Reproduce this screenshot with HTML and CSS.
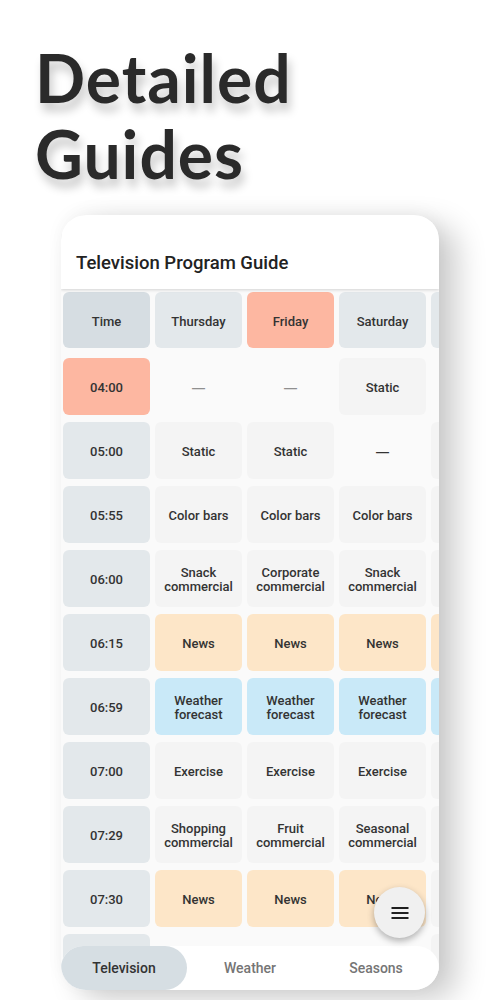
FILE: index.html
```html
<!DOCTYPE html>
<html lang="en">
<head>
<meta charset="utf-8">
<title>Detailed Guides</title>
<link rel="stylesheet" href="styles.css">
</head>
<body>
<div class="page">
  <h1 class="hero">Detailed<br>Guides</h1>
  <div class="phone">
    <header class="app-bar"><h2 class="app-title">Television Program Guide</h2></header>
    <div class="schedule">
      <div class="row head">
        <div class="cell time-head">Time</div>
        <div class="cell day">Thursday</div>
        <div class="cell day hot">Friday</div>
        <div class="cell day">Saturday</div>
        <div class="cell day"></div>
      </div>
      <div class="rows">
        <div class="row">
          <div class="cell time hot">04:00</div>
          <div class="cell empty dash faint">—</div>
          <div class="cell empty dash faint">—</div>
          <div class="cell">Static</div>
          <div class="cell empty"></div>
        </div>
        <div class="row">
          <div class="cell time">05:00</div>
          <div class="cell">Static</div>
          <div class="cell">Static</div>
          <div class="cell empty dash">—</div>
          <div class="cell"></div>
        </div>
        <div class="row">
          <div class="cell time">05:55</div>
          <div class="cell">Color bars</div>
          <div class="cell">Color bars</div>
          <div class="cell">Color bars</div>
          <div class="cell"></div>
        </div>
        <div class="row">
          <div class="cell time">06:00</div>
          <div class="cell">Snack<br>commercial</div>
          <div class="cell">Corporate<br>commercial</div>
          <div class="cell">Snack<br>commercial</div>
          <div class="cell"></div>
        </div>
        <div class="row">
          <div class="cell time">06:15</div>
          <div class="cell news">News</div>
          <div class="cell news">News</div>
          <div class="cell news">News</div>
          <div class="cell news"></div>
        </div>
        <div class="row">
          <div class="cell time">06:59</div>
          <div class="cell weather">Weather<br>forecast</div>
          <div class="cell weather">Weather<br>forecast</div>
          <div class="cell weather">Weather<br>forecast</div>
          <div class="cell weather"></div>
        </div>
        <div class="row">
          <div class="cell time">07:00</div>
          <div class="cell">Exercise</div>
          <div class="cell">Exercise</div>
          <div class="cell">Exercise</div>
          <div class="cell"></div>
        </div>
        <div class="row">
          <div class="cell time">07:29</div>
          <div class="cell">Shopping<br>commercial</div>
          <div class="cell">Fruit<br>commercial</div>
          <div class="cell">Seasonal<br>commercial</div>
          <div class="cell"></div>
        </div>
        <div class="row">
          <div class="cell time">07:30</div>
          <div class="cell news">News</div>
          <div class="cell news">News</div>
          <div class="cell news">News</div>
          <div class="cell"></div>
        </div>
        <div class="row">
          <div class="cell time"></div>
          <div class="cell empty"></div>
          <div class="cell empty"></div>
          <div class="cell empty"></div>
          <div class="cell"></div>
        </div>
      </div>
    </div>
    <button class="fab" aria-label="Menu">
      <svg width="18" height="14" viewBox="0 0 18 14"><path d="M0.5 2h17M0.5 7h17M0.5 12h17" stroke="#1f1f1f" stroke-width="2" fill="none"/></svg>
    </button>
    <nav class="tabs">
      <div class="tab active">Television</div>
      <div class="tab">Weather</div>
      <div class="tab">Seasons</div>
    </nav>
  </div>
</div>
</body>
</html>
```

FILE: styles.css
```css
html, body {
  margin: 0;
  padding: 0;
  background: #ffffff;
}

.page {
  width: 500px;
  height: 1000px;
  overflow: hidden;
  padding-top: 40px;
  box-sizing: border-box;
}

.hero {
  margin: 0;
  padding-left: 35px;
  font-family: Lato, "Liberation Sans", sans-serif;
  font-weight: 700;
  font-size: 66px;
  line-height: 76px;
  color: #2a2a2a;
  letter-spacing: 1px;
  text-shadow: 3px 8px 10px rgba(0, 0, 0, 0.22);
}

.phone {
  position: relative;
  margin: 23px 0 0 61px;
  width: 378px;
  height: 775px;
  border-radius: 25px;
  overflow: hidden;
  background: #fafafa;
  box-shadow: 18px 10px 30px rgba(0, 0, 0, 0.2), 0 -4px 18px rgba(0, 0, 0, 0.04);
}

.app-bar {
  position: relative;
  z-index: 2;
  height: 74px;
  box-sizing: border-box;
  padding: 37px 15px 0;
  background: #ffffff;
  box-shadow: 0 1px 3px rgba(0, 0, 0, 0.16);
}

.app-title {
  margin: 0;
  font-family: Roboto, "Liberation Sans", sans-serif;
  font-weight: 500;
  font-size: 18.5px;
  line-height: 22px;
  color: #222222;
}

.schedule {
  padding: 3px 0 0 2px;
  font-family: Roboto, "Liberation Sans", sans-serif;
  font-weight: 500;
  font-size: 13px;
  color: #333333;
}

.row {
  display: flex;
  gap: 5px;
  height: 57px;
}

.row.head {
  height: 56px;
  margin-bottom: 10px;
}

.rows {
  display: flex;
  flex-direction: column;
  gap: 7px;
}

.cell {
  flex: 0 0 87px;
  box-sizing: border-box;
  padding-top: 3px;
  display: flex;
  align-items: center;
  justify-content: center;
  text-align: center;
  line-height: 13.7px;
  border-radius: 6px;
  background: #f4f4f4;
}

.cell.day,
.cell.time {
  background: #e3e8eb;
}

.cell.time-head {
  background: #d6dde2;
}

.cell.hot {
  background: #fdb7a1;
}

.cell.news {
  background: #fde6c8;
}

.cell.weather {
  background: #c9e9f8;
}

.cell.empty {
  background: transparent;
}

.cell.dash {
  font-family: "Liberation Sans", Arial, sans-serif;
  font-weight: 700;
  font-size: 13px;
}

.cell.faint {
  color: #8f8f8f;
}

.fab {
  position: absolute;
  right: 14px;
  bottom: 52px;
  z-index: 3;
  width: 51px;
  height: 51px;
  padding: 0;
  border: none;
  border-radius: 50%;
  background: #f0f0f0;
  box-shadow: 0 3px 7px rgba(0, 0, 0, 0.3);
  display: flex;
  align-items: center;
  justify-content: center;
}

.tabs {
  position: absolute;
  left: 0;
  right: 0;
  bottom: 0;
  z-index: 2;
  height: 44px;
  display: grid;
  grid-template-columns: repeat(3, 1fr);
  background: #ffffff;
  border-radius: 22px 22px 0 0;
  font-family: Roboto, "Liberation Sans", sans-serif;
  font-weight: 500;
  font-size: 14px;
  color: #757575;
}

.tab {
  display: flex;
  align-items: center;
  justify-content: center;
  border-radius: 22px;
}

.tab.active {
  background: #d6dee3;
  color: #333333;
}
```
